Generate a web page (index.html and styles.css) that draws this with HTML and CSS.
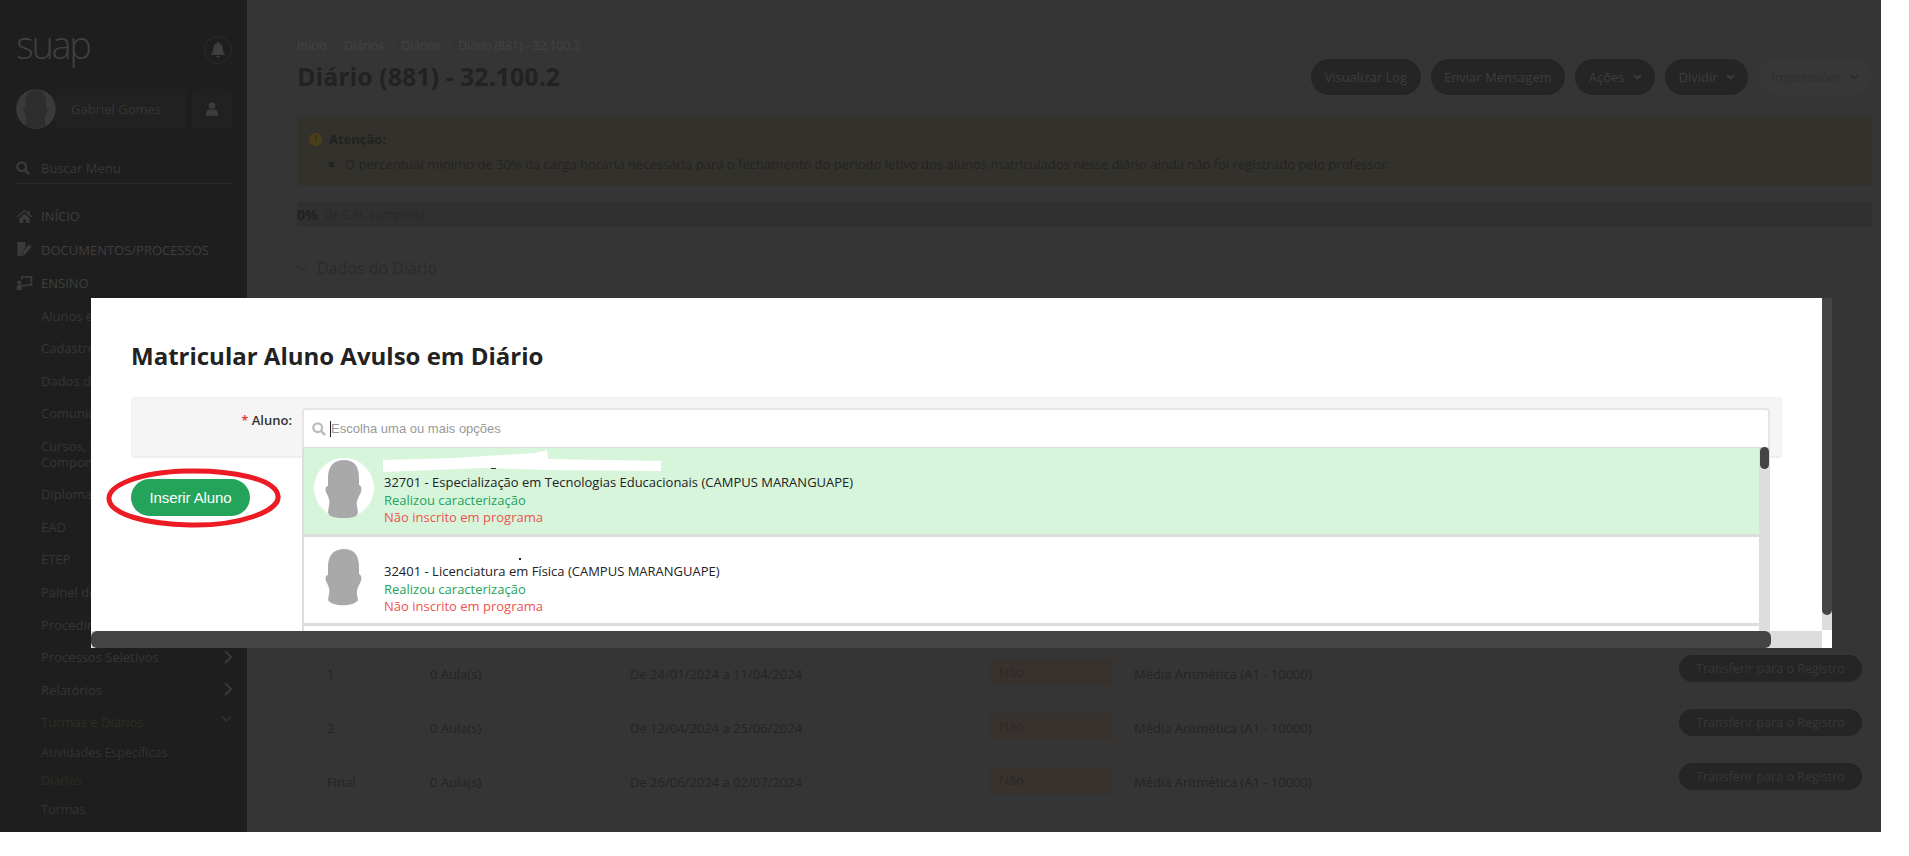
FILE: index.html
```html
<!DOCTYPE html>
<html lang="pt-BR">
<head>
<meta charset="utf-8">
<title>Diário (881) - 32.100.2</title>
<link rel="stylesheet" href="styles.css">
</head>
<body>
<div class="page">
  <aside class="sidebar">
    <div class="brand">
      <span class="logo">suap</span>
      <span class="bell"><svg viewBox="0 0 14 16" width="14" height="16"><path d="M7 0a1.2 1.2 0 0 0-1.2 1.3C3.600 1.900 2.300 3.700 2.300 6c0 4-1.300 5-2.300 6.300V13h14v-.7C13 11 11.700 10 11.700 6c0-2.300-1.300-4.100-3.500-4.700A1.200 1.200 0 0 0 7 0zM5.200 14a1.800 1.800 0 0 0 3.600 0z"/></svg></span>
    </div>
    <div class="profile">
      <svg class="profile-photo" viewBox="0 0 60 60" width="40" height="40"><circle class="photo-bg" cx="30" cy="30" r="30"/><path class="photo-head" d="M30 2C20 2 14 8 14 20v8c-3 0-3 5-1 8 2 4 3 8 2 11l-1 8c4 4 26 5 30 0l-1-7c-1-4 1-8 3-12 2-3 2-8-1-9v-7C45 8 40 2 30 2z"/></svg>
      <span class="profile-name">Gabriel Gomes</span>
      <span class="profile-btn"><svg viewBox="0 0 14 16" width="12" height="14"><circle cx="7" cy="4" r="4"/><path d="M0 16v-3c0-3 2-4.500 4-4.500h6c2 0 4 1.500 4 4.500v3z"/></svg></span>
    </div>
    <div class="search">
      <svg viewBox="0 0 16 16" width="14" height="14"><circle cx="6.500" cy="6.500" r="5" fill="none" stroke-width="2.500"/><path d="M10.500 10.500 15 15" stroke-width="3"/></svg>
      <span>Buscar Menu</span>
    </div>
    <nav class="nav">
      <a class="nav-top"><svg viewBox="0 0 18 16" width="16" height="14"><path d="M9 1 0 8.500l1 1.200L9 3l8 6.700 1-1.200-3-2.500V2h-2v2.300zM3 10.500V16h4.500v-4h3v4H15v-5.500L9 5.500z"/></svg>INÍCIO</a>
      <a class="nav-top"><svg viewBox="0 0 18 18" width="16" height="16"><path d="M1 0h9v6l-4 7v3H1zM11 6l3-3 3 2-7 9-4 2 1-4z"/></svg>DOCUMENTOS/PROCESSOS</a>
      <a class="nav-top"><svg viewBox="0 0 18 16" width="17" height="14"><path d="M5 0h13v11h-8V9h6V2H7v2H5zM3 5a2.500 2.500 0 1 1 0 5 2.500 2.500 0 0 1 0-5zM0 16v-3c0-2 1-3 3-3h7v2H6v4z"/></svg>ENSINO</a>
      <a class="nav-sub">Alunos e Professores</a>
      <a class="nav-sub">Cadastros</a>
      <a class="nav-sub">Dados do Aluno</a>
      <a class="nav-sub">Comunicação</a>
      <a class="nav-sub">Cursos, Matrizes e<br>Componentes</a>
      <a class="nav-sub">Diplomas</a>
      <a class="nav-sub">EAD</a>
      <a class="nav-sub">ETEP</a>
      <a class="nav-sub">Painel de Controle</a>
      <a class="nav-sub">Procedimentos</a>
      <a class="nav-sub has-arrow">Processos Seletivos<svg viewBox="0 0 8 14" width="8" height="14"><path d="m1 1 6 6-6 6" fill="none" stroke-width="2"/></svg></a>
      <a class="nav-sub has-arrow">Relatórios<svg viewBox="0 0 8 14" width="8" height="14"><path d="m1 1 6 6-6 6" fill="none" stroke-width="2"/></svg></a>
      <a class="nav-sub has-arrow is-open">Turmas e Diários<svg viewBox="0 0 12 8" width="11" height="8"><path d="m1 1 5 5 5-5" fill="none" stroke-width="2"/></svg></a>
      <a class="nav-leaf">Atividades Específicas</a>
      <a class="nav-leaf is-current">Diários</a>
      <a class="nav-leaf">Turmas</a>
    </nav>
  </aside>

  <main class="main">
    <div class="breadcrumb">
      <span>Início</span><i>›</i><span>Diários</span><i>›</i><span>Diários</span><i>›</i><span>Diário (881) - 32.100.2</span>
    </div>
    <div class="head-row">
      <h1>Diário (881) - 32.100.2</h1>
      <div class="actions">
        <a class="btn">Visualizar Log</a>
        <a class="btn">Enviar Mensagem</a>
        <a class="btn">Ações<svg viewBox="0 0 10 8" width="9" height="7"><path d="m1 1 4 4 4-4" fill="none" stroke-width="2.400"/></svg></a>
        <a class="btn">Dividir<svg viewBox="0 0 10 8" width="9" height="7"><path d="m1 1 4 4 4-4" fill="none" stroke-width="2.400"/></svg></a>
        <a class="btn btn-muted">Impressões<svg viewBox="0 0 10 8" width="9" height="7"><path d="m1 1 4 4 4-4" fill="none" stroke-width="2.400"/></svg></a>
      </div>
    </div>
    <div class="alert">
      <p class="alert-title"><span class="alert-icon">!</span>Atenção:</p>
      <ul><li>O percentual mínimo de 30% da carga horária necessária para o fechamento do período letivo dos alunos matriculados nesse diário ainda não foi registrado pelo professor.</li></ul>
    </div>
    <div class="progress"><b>0%</b><span>de C.H. cumprida</span></div>
    <h2 class="section"><svg viewBox="0 0 12 8" width="10" height="7"><path d="m1 1 5 5 5-5" fill="none" stroke-width="1.500"/></svg>Dados do Diário</h2>
    <div class="data-lines">
      <div class="data-line tall"></div>
      <div class="data-line"></div>
    </div>
    <table class="stages">
      <colgroup><col class="c1"><col class="c2"><col class="c3"><col class="c4"><col class="c5"><col></colgroup>
      <thead><tr><th></th><th></th><th></th><th></th><th></th><th></th></tr></thead>
      <tbody>
        <tr><td>1</td><td>0 Aula(s)</td><td>De 24/01/2024 a 11/04/2024</td><td><span class="status">Não</span></td><td>Média Aritmética (A1 - 10000)</td><td class="cell-btn"><a class="btn btn-small">Transferir para o Registro</a></td></tr>
        <tr><td>2</td><td>0 Aula(s)</td><td>De 12/04/2024 a 25/06/2024</td><td><span class="status">Não</span></td><td>Média Aritmética (A1 - 10000)</td><td class="cell-btn"><a class="btn btn-small">Transferir para o Registro</a></td></tr>
        <tr><td>Final</td><td>0 Aula(s)</td><td>De 26/06/2024 a 02/07/2024</td><td><span class="status">Não</span></td><td>Média Aritmética (A1 - 10000)</td><td class="cell-btn"><a class="btn btn-small">Transferir para o Registro</a></td></tr>
      </tbody>
    </table>
  </main>

  <section class="modal">
    <div class="modal-body">
      <h3>Matricular Aluno Avulso em Diário</h3>
      <div class="form-box">
        <label><em>*</em> Aluno:</label>
        <div class="field">
          <div class="input">
            <svg viewBox="0 0 16 16" width="14" height="14"><circle cx="6.500" cy="6.500" r="5" fill="none" stroke-width="2.500"/><path d="M10.500 10.500 15 15" stroke-width="3"/></svg>
            <span class="caret"></span><span class="placeholder">Escolha uma ou mais opções</span>
          </div>
          <div class="dropdown">
            <div class="option is-selected">
              <svg class="photo" viewBox="0 0 60 60" width="60" height="60"><circle cx="30" cy="30" r="30" fill="#fff"/><path fill="#a9a9a9" d="M30 2C20 2 14 8 14 20v8c-3 0-3 5-1 8 2 4 3 8 2 11l-1 8 2 3c8 3 19 3 26 0l2-3-1-7c-1-4 1-8 3-12 2-3 2-8-1-9v-7C45 8 40 2 30 2z"/></svg>
              <div class="option-text">
                <p>32701 - Especialização em Tecnologias Educacionais (CAMPUS MARANGUAPE)</p>
                <p class="ok">Realizou caracterização</p>
                <p class="no">Não inscrito em programa</p>
              </div>
              <svg class="redaction" viewBox="0 0 360 26" width="360" height="26"><path fill="#fff" d="M79 12l71-2 81-5 12-3 1 9 56 1 57 1v10l-113-1-64-2-101 4z"/><path fill="#333" d="M187 20h5v1h-5z"/></svg>
            </div>
            <div class="option">
              <svg class="photo" viewBox="0 0 60 60" width="60" height="60"><path fill="#a9a9a9" d="M30 2C20 2 14 8 14 20v8c-3 0-3 5-1 8 2 4 3 8 2 11l-1 6c4 7 26 7 30 0l-1-5c-1-4 1-8 3-12 2-3 2-8-1-9v-7C45 8 40 2 30 2z"/></svg>
              <div class="option-text">
                <p>32401 - Licenciatura em Física (CAMPUS MARANGUAPE)</p>
                <p class="ok">Realizou caracterização</p>
                <p class="no">Não inscrito em programa</p>
              </div>
              <span class="speck"></span>
            </div>
            <div class="option"></div>
            <span class="list-thumb"></span>
          </div>
        </div>
      </div>
      <a class="submit">Inserir Aluno</a>
    </div>
    <div class="vbar"><span></span></div>
    <div class="hbar"><span></span></div>
    <div class="corner"></div>
  </section>

  <svg class="highlight" viewBox="0 0 180 64" width="180" height="64"><path fill="none" stroke="#ed1c24" stroke-width="5" d="M6 33C5 20 35 6 84 5c45-1 89 8 91 25 2 15-38 30-88 29C42 58 7 48 6 33z"/></svg>
</div>
</body>
</html>
```

FILE: styles.css
```css
* { box-sizing: border-box; }
html, body { margin: 0; padding: 0; background: #fff; }
body { font-family: "Open Sans", "Liberation Sans", sans-serif; font-size: 13px; overflow: hidden; }
p, ul, h1, h2, h3 { margin: 0; padding: 0; }
a { display: block; }

.page { position: relative; display: flex; width: 1881px; height: 832px; overflow: hidden; background: #353535; color: #222; }

/* sidebar */
.sidebar { flex: 0 0 247px; background: #1e1e1e; padding: 0 15px 0 16px; color: #3a3a3a; fill: #3a3a3a; stroke: #3a3a3a; }
.sidebar svg path, .sidebar svg circle { stroke: none; }
.sidebar svg path[fill="none"] { stroke: #3a3a3a; }
.brand { display: flex; justify-content: space-between; align-items: center; height: 50px; margin-top: 25px; }
.logo { margin-bottom: 12px; font-size: 38px; font-weight: 300; letter-spacing: -2.300px; line-height: 50px; color: #404040; }
.bell { display: flex; align-items: center; justify-content: center; width: 28px; height: 28px; border: 1px solid #2a2a2a; border-radius: 50%; fill: #3e3e3e; }
.profile { display: flex; align-items: center; height: 40px; margin-top: 14px; }
.profile-photo { flex: none; border-radius: 50%; position: relative; z-index: 1; }
.sidebar .photo-bg { fill: #3a3a3a; }
.sidebar .photo-head { fill: #2e2e2e; }
.profile-name { flex: 1; height: 40px; line-height: 40px; padding-left: 15px; margin-right: 6px; background: #212121; border-radius: 0 4px 4px 0; font-size: 13px; color: #363636; white-space: nowrap; }
.profile-btn { flex: none; display: flex; align-items: center; justify-content: center; width: 40px; height: 40px; background: #212121; border-radius: 4px; fill: #3c3c3c; }
.search { display: flex; align-items: center; gap: 11px; height: 32px; margin-top: 23px; border-bottom: 1px solid #2a2a2a; font-size: 13px; color: #383838; }
.search svg { stroke: #3a3a3a; fill: none; }
.search svg path, .search svg circle { stroke: #3a3a3a; }
.nav { margin-top: 15px; }
.nav-top { display: flex; align-items: center; height: 33.500px; font-size: 13px; color: #3e3e3e; white-space: nowrap; }
.nav-top:first-child { height: 34.500px; }
.nav-top:nth-child(2) { height: 32.500px; }
.nav-top svg { flex: none; width: 17px; margin-right: 8px; }
.nav-sub { position: relative; padding: 8.280px 0 8.280px 25px; line-height: 16px; font-size: 13px; color: #363636; white-space: nowrap; }
.has-arrow svg { position: absolute; right: 0; top: 9px; }
.is-open { color: #2b3020; }
.sidebar .is-open svg path { stroke: #2b3020; }
.nav-leaf { display: flex; align-items: center; height: 28.300px; padding-left: 25px; font-size: 12.500px; color: #333; border-bottom: 1px solid #212121; }
.nav-leaf:last-child { border-bottom: 0; }
.is-current { color: #2a2e20; }

/* main */
.main { flex: 1; min-width: 0; padding: 36px 9px 0 50px; }
.breadcrumb { display: flex; align-items: center; height: 18px; font-size: 12px; color: #444; }
.breadcrumb i { font-style: normal; margin: 0 7px; color: #3e3e3e; }
.head-row { display: flex; justify-content: space-between; align-items: center; height: 36px; margin-top: 5px; }
h1 { padding-bottom: 3px; font-size: 25px; font-weight: 700; color: #222; white-space: nowrap; }
.actions { display: flex; gap: 10px; }
.btn { display: flex; align-items: center; justify-content: center; gap: 8px; height: 36px; padding: 0 13.500px; border-radius: 18px; background: #252525; color: #3d3d3d; font-size: 13px; white-space: nowrap; }
.btn svg { stroke: #3d3d3d; }
.btn-muted { background: #373737; color: #2d2d2d; }
.btn-muted svg { stroke: #2d2d2d; }
.alert { height: 69px; margin-top: 22px; padding: 13px 12px 0 12px; background: #33312c; border-radius: 4px; }
.alert-title { display: flex; align-items: center; height: 18px; font-weight: 700; color: #222; }
.alert-icon { display: flex; align-items: center; justify-content: center; width: 13px; height: 13px; margin-right: 7px; border-radius: 50%; background: #4a3f18; color: #33312c; font-size: 10px; }
.alert ul { list-style: none; margin-top: 7px; padding-left: 20px; }
.alert li { position: relative; padding-left: 16px; line-height: 18px; letter-spacing: .02px; color: #232323; white-space: nowrap; }
.alert li::before { content: ""; position: absolute; left: 0; top: 7px; width: 5px; height: 5px; background: #222; }
.progress { display: flex; align-items: center; gap: 7px; height: 26px; margin-top: 15px; background: #303030; border-radius: 4px; font-size: 12.500px; color: #282828; }
.progress b { font-size: 14px; color: #222; }
.section { display: flex; align-items: center; gap: 10px; height: 22px; margin-top: 30px; font-size: 16px; font-weight: 400; color: #2a2a2a; }
.section svg { stroke: #2e2e2e; }
.data-line { height: 59px; border-bottom: 1px solid #323232; }
.data-line.tall { height: 151px; }
.data-lines { margin-bottom: 118px; }
.stages { width: 1556px; margin-left: 19px; border-collapse: collapse; table-layout: fixed; font-size: 13px; color: #242424; border: 1px solid #323232; }
.c1 { width: 103px; } .c2 { width: 200px; } .c3 { width: 357px; } .c4 { width: 147px; } .c5 { width: 369px; }
.stages th { height: 38px; border: 1px solid #323232; }
.stages td { height: 54px; padding: 3px 10px 0; border: 1px solid #323232; white-space: nowrap; vertical-align: middle; }
.status { display: block; height: 27px; margin: -3px 0 0 2px; line-height: 26px; padding-left: 9px; background: #38322f; border-left: 1px solid #4a2d2a; color: #2c2826; }
.stages td.cell-btn { padding: 0 9px 0 0; }
.cell-btn .btn-small { height: 27px; width: 183px; padding: 0; margin: -8px 0 0 auto; border-radius: 14px; font-size: 12.500px; color: #373737; background: #252525; }

/* modal */
.modal { position: absolute; left: 91px; top: 298px; display: grid; grid-template-columns: 1731px 10px; grid-template-rows: 333px 17px; width: 1741px; height: 350px; background: #fff; }
.modal-body { position: relative; overflow: hidden; padding: 42px 40px 0; color: #222; }
h3 { font-size: 24px; line-height: 32px; font-weight: 700; color: #222; white-space: nowrap; }
.form-box { display: flex; height: 61px; margin-top: 25px; padding: 10px 11px 0 0; background: #f5f5f5; border: 1px solid #f0f0f0; border-bottom: 2px solid #eee; border-radius: 4px; }
.form-box label { flex: 0 0 160px; padding-top: 3px; line-height: 18px; text-align: right; font-size: 13px; font-weight: 600; color: #333; white-space: nowrap; }
.form-box em { font-style: normal; color: #e53935; }
.field { position: relative; flex: 1; margin-left: 10px; }
.input { display: flex; align-items: center; height: 39px; padding: 0 0 0 8px; background: #fff; border: 2px solid #e6e6e6; border-bottom: 0; border-radius: 4px 4px 0 0; }
.input svg { flex: none; stroke: #bbb; fill: none; margin-right: 4px; }
.input svg path, .input svg circle { stroke: #bbb; }
.caret { flex: none; width: 1px; height: 16px; background: #222; }
.placeholder { font-family: "Liberation Sans", Arial, sans-serif; font-size: 13px; color: #999; white-space: nowrap; }
.dropdown { position: absolute; left: 0; right: 0; top: 39px; height: 200px; padding-right: 11px; background: #ddd; border-top: 1px solid #ddd; border-left: 2px solid #ddd; font-size: 13px; line-height: 17.500px; }
.option { position: relative; display: flex; height: 86px; margin-bottom: 3px; padding: 10px 0 0 10px; background: #fff; }
.option:last-of-type { height: 40px; }
.is-selected { background: #d7f5db; }
.photo { flex: none; }
.option-text { padding: 16px 0 0 10px; color: #222; white-space: nowrap; }
.ok { color: #23a45d; }
.no { color: #ef5350; }
.redaction { position: absolute; left: 0; top: 0; }
.speck { position: absolute; left: 215px; top: 21px; width: 2px; height: 2px; background: #222; }
.list-thumb { position: absolute; right: 1px; top: -1px; width: 9px; height: 22px; border-radius: 5px; background: #444; }
.submit { display: flex; align-items: center; justify-content: center; width: 119px; height: 37px; margin-top: 21px; border-radius: 19px; background: #23a45a; color: #fff; font-family: "Liberation Sans", Arial, sans-serif; font-size: 15px; letter-spacing: -.1px; }
.vbar { position: relative; background: #ddd; height: 332px; }
.vbar span { display: block; height: 317px; background: #444; border-radius: 0 0 5px 5px; }
.hbar { background: #ddd; }
.hbar span { display: block; width: 1680px; height: 17px; background: #444; border-radius: 6px; }
.corner { background: #fff; }
.highlight { position: absolute; left: 103px; top: 466px; }
```
